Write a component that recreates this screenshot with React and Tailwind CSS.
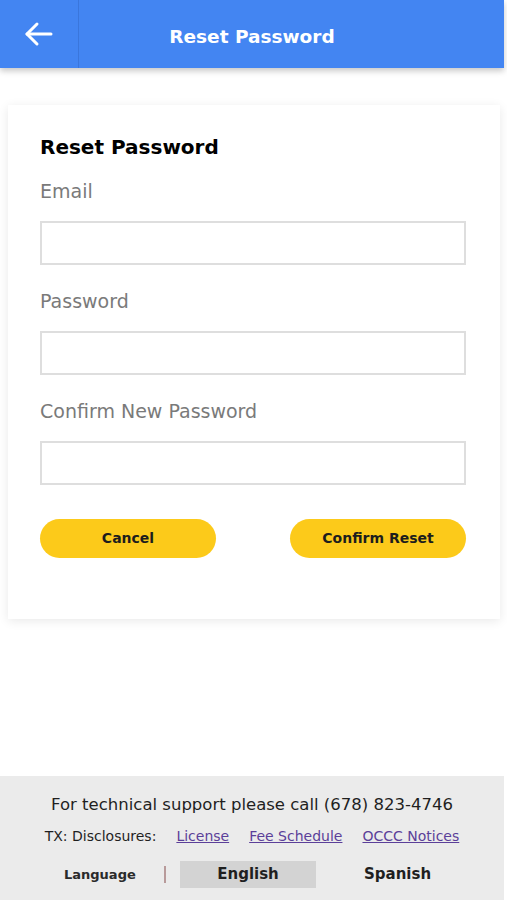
import React from "react";

function Field({ label }) {
  return (
    <div className="flex flex-col">
      <label className="text-[19px] leading-[22px] text-[#7a7a7a] mb-[19px]">{label}</label>
      <div className="h-[44px] border-2 border-[#dedede] bg-white" />
    </div>
  );
}

export default function App() {
  return (
    <div
      className="w-[504px] h-[900px] bg-white flex flex-col relative"
      style={{ fontFamily: '"DejaVu Sans", "Noto Sans", sans-serif' }}
    >
      <header className="h-[68px] bg-[#4385f2] flex shadow-[0_3px_6px_rgba(0,0,0,0.22)] relative z-10">
        <div className="w-[79px] flex items-center justify-center border-r border-[#3a76dc]">
          <svg width="30" height="26" viewBox="0 0 30 26" fill="none" stroke="white" strokeWidth="3" strokeLinecap="round" strokeLinejoin="round">
            <path d="M27 13H3" />
            <path d="M13 3L3 13l10 10" />
          </svg>
        </div>
        <div className="flex-1 flex items-center justify-center text-white font-bold text-[18.5px] pr-[79px] pt-[5px]">
          Reset Password
        </div>
      </header>

      <div className="ml-[8px] mr-[4px] mt-[37px] bg-white shadow-[0_2px_10px_rgba(0,0,0,0.09)] pl-[32px] pr-[34px] pt-[30px] pb-[61px]">
        <h1 className="text-[20px] font-bold text-black leading-[24px] mb-[21px]">Reset Password</h1>
        <div className="flex flex-col gap-[25px]">
          <Field label="Email" />
          <Field label="Password" />
          <Field label="Confirm New Password" />
        </div>
        <div className="flex justify-between mt-[34px]">
          <button className="w-[176px] h-[39px] rounded-full bg-[#fcca1a] text-[14px] font-bold text-[#1d1d1d]">
            Cancel
          </button>
          <button className="w-[176px] h-[39px] rounded-full bg-[#fcca1a] text-[14px] font-bold text-[#1d1d1d]">
            Confirm Reset
          </button>
        </div>
      </div>

      <div className="flex-1" />

      <footer className="h-[124px] bg-[#ebebeb] flex flex-col items-center pt-[18px]">
        <p className="text-[16.5px] text-[#1f1f1f] leading-[22px]">For technical support please call (678) 823-4746</p>
        <div className="flex items-center text-[14px] mt-[11px] leading-[18px]">
          <span className="text-[#1f1f1f] mr-[20px]">TX: Disclosures:</span>
          <a className="underline text-[#5b3f99] mr-[20px]">License</a>
          <a className="underline text-[#5b3f99] mr-[20px]">Fee Schedule</a>
          <a className="underline text-[#5b3f99]">OCCC Notices</a>
        </div>
        <div className="flex items-center mt-[16px] w-full">
          <span className="ml-[64px] w-[72px] text-[13px] font-semibold text-[#2a2a2a]">Language</span>
          <span className="ml-[28px] w-[2px] h-[17px] bg-[#b89a9a]" />
          <div className="ml-[14px] w-[136px] h-[27px] bg-[#d3d3d3] flex items-center justify-center text-[15px] font-bold text-[#1f1f1f]">
            English
          </div>
          <span className="ml-[48px] text-[15px] font-bold text-[#1f1f1f]">Spanish</span>
        </div>
      </footer>
    </div>
  );
}
